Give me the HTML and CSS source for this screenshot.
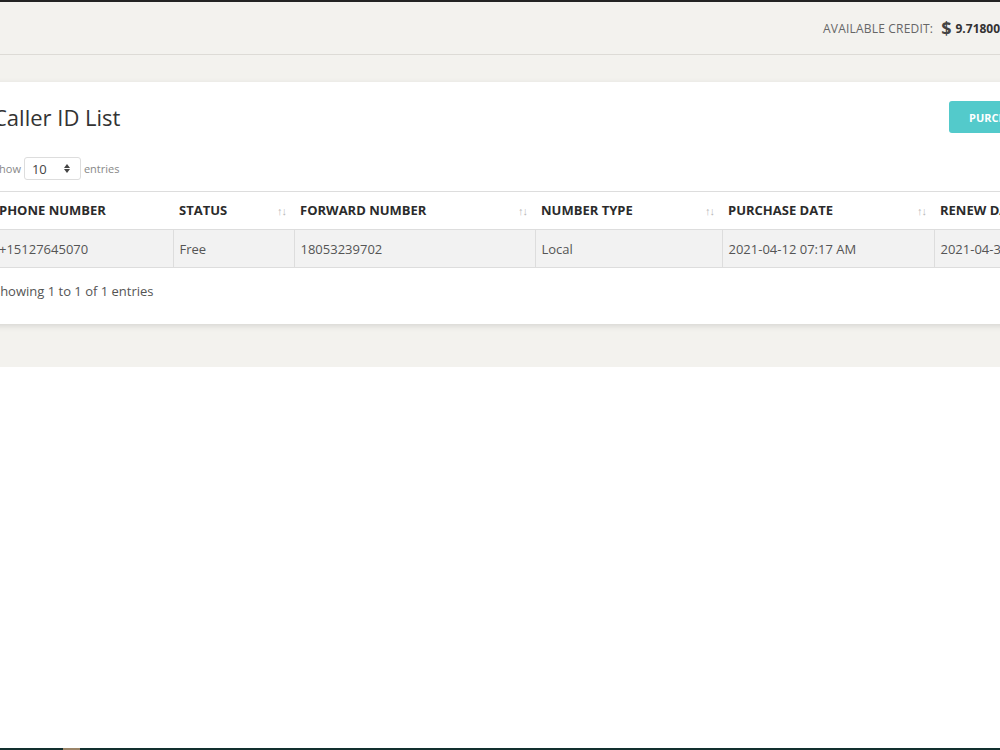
FILE: index.html
```html
<!DOCTYPE html>
<html lang="en">
<head>
  <meta charset="UTF-8">
  <title>Caller ID List</title>
  <link rel="stylesheet" href="styles.css">
</head>
<body>

  <div class="topline"></div>

  <div class="topbar">
    <span class="credit-label">AVAILABLE CREDIT:</span>
    <span class="credit-sign">$</span>
    <span class="credit-value">9.71800</span>
  </div>

  <div class="main">
    <div class="card">
      <div class="card-head">
        <h1>Caller ID List</h1>
        <button class="btn-buy">PURCHASE CALLER ID</button>
      </div>

      <div class="length">
        Show
        <span class="select">10
          <span class="arrows"><i class="up"></i><i class="down"></i></span>
        </span>
        entries
      </div>

      <table>
        <thead>
          <tr>
            <th class="c1">PHONE NUMBER</th>
            <th class="c2">STATUS <span class="sort">&#8593;&#8595;</span></th>
            <th class="c3">FORWARD NUMBER <span class="sort">&#8593;&#8595;</span></th>
            <th class="c4">NUMBER TYPE <span class="sort">&#8593;&#8595;</span></th>
            <th class="c5">PURCHASE DATE <span class="sort">&#8593;&#8595;</span></th>
            <th class="c6">RENEW DATE <span class="sort">&#8593;&#8595;</span></th>
          </tr>
        </thead>
        <tbody>
          <tr>
            <td>+15127645070</td>
            <td>Free</td>
            <td>18053239702</td>
            <td>Local</td>
            <td>2021-04-12 07:17 AM</td>
            <td>2021-04-30 07:17 AM</td>
          </tr>
        </tbody>
      </table>

      <div class="info">Showing 1 to 1 of 1 entries</div>
    </div>
  </div>

  <div class="taskbar"><span class="task-item"></span></div>

</body>
</html>
```

FILE: styles.css
```css
html, body {
  overflow: hidden;
}

body {
  margin: 0;
  height: 750px;
  display: flex;
  flex-direction: column;
  background: #fff;
  font-family: "Open Sans", Arial, sans-serif;
  color: #555;
}

.topline {
  height: 2px;
  background: #232323;
}

.topbar {
  height: 52px;
  background: #f3f2ee;
  border-bottom: 1px solid #dddbd6;
  display: flex;
  align-items: center;
  padding-left: 823px;
  white-space: nowrap;
}

.credit-label {
  font-size: 12px;
  color: #666;
  letter-spacing: 0.2px;
}

.credit-sign {
  font-size: 18px;
  font-weight: bold;
  color: #444;
  margin: 0 4px 0 8px;
}

.credit-value {
  font-size: 12px;
  font-weight: bold;
  color: #333;
}

.main {
  background: #f3f2ee;
  padding: 27px 0 43px;
  margin-left: -30px;
  width: 1100px;
}

.card {
  background: #fff;
  padding: 19px 0 0 23px;
  height: 223px;
  box-shadow: 0 2px 6px rgba(0, 0, 0, 0.12);
}

.card-head {
  display: flex;
  align-items: center;
  height: 32px;
}

h1 {
  margin: 0;
  font-size: 22px;
  font-weight: normal;
  color: #333;
  flex: 1;
}

.btn-buy {
  height: 32px;
  width: 121px;
  border: none;
  border-radius: 3px 0 0 3px;
  background: #53cacb;
  color: #fff;
  font-family: inherit;
  font-size: 11px;
  font-weight: bold;
  text-align: left;
  padding-left: 20px;
  white-space: nowrap;
  overflow: hidden;
}

.length {
  margin-top: 24px;
  height: 23px;
  display: flex;
  align-items: center;
  font-size: 11px;
  color: #888;
}

.select {
  display: inline-flex;
  align-items: center;
  justify-content: space-between;
  width: 38px;
  height: 21px;
  margin: 0 3px;
  padding: 0 10px 0 7px;
  border: 1px solid #ddd;
  border-radius: 3px;
  font-size: 13px;
  color: #444;
}

.arrows {
  display: flex;
  flex-direction: column;
  gap: 1px;
}

.arrows i {
  width: 0;
  height: 0;
  border-left: 3px solid transparent;
  border-right: 3px solid transparent;
}

.arrows .up {
  border-bottom: 4px solid #444;
}

.arrows .down {
  border-top: 4px solid #444;
}

table {
  margin-top: 11px;
  border-collapse: collapse;
  table-layout: fixed;
  width: 1080px;
  font-size: 13px;
}

th, td {
  height: 37px;
  padding: 0 6px;
  text-align: left;
  white-space: nowrap;
  overflow: hidden;
}

th {
  color: #2b2b2b;
  font-weight: bold;
  line-height: 37px;
  border-top: 1px solid #ddd;
  border-bottom: 1px solid #ddd;
}

td {
  background: #f2f2f2;
  border-bottom: 1px solid #ddd;
  border-left: 1px solid #ddd;
}

td:first-child {
  border-left: none;
}

.c1 { width: 168px; }
.c2 { width: 109px; }
.c3 { width: 229px; }
.c4 { width: 175px; }
.c5 { width: 200px; }

.sort {
  float: right;
  margin-right: 2px;
  font-size: 11px;
  line-height: 37px;
  font-weight: normal;
  color: #b8b8b8;
  letter-spacing: -1px;
}

.info {
  margin-top: 14px;
  font-size: 13px;
  color: #555;
}

.taskbar {
  margin-top: auto;
  height: 2px;
  background: #12302f;
}

.task-item {
  display: block;
  margin-left: 63px;
  width: 17px;
  height: 2px;
  background: #9a8468;
}
```
